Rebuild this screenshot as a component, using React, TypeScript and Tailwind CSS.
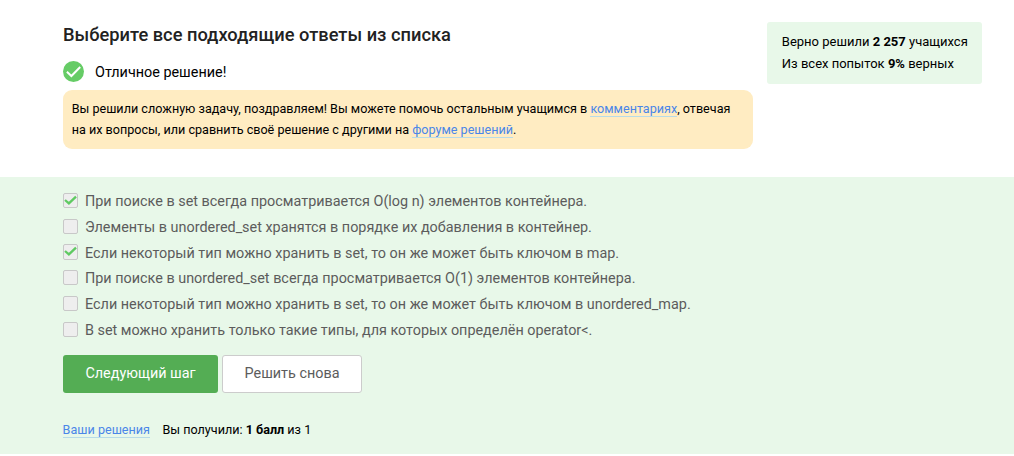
import React from "react";

const answers = [
  { text: "При поиске в set всегда просматривается O(log n) элементов контейнера.", checked: true },
  { text: "Элементы в unordered_set хранятся в порядке их добавления в контейнер.", checked: false },
  { text: "Если некоторый тип можно хранить в set, то он же может быть ключом в map.", checked: true },
  { text: "При поиске в unordered_set всегда просматривается O(1) элементов контейнера.", checked: false },
  { text: "Если некоторый тип можно хранить в set, то он же может быть ключом в unordered_map.", checked: false },
  { text: "В set можно хранить только такие типы, для которых определён operator<.", checked: false },
];

function Link({ children }: { children: React.ReactNode }) {
  return (
    <a href="#" className="border-b border-[#b7dbe8] text-[#4a86e8]">
      {children}
    </a>
  );
}

function Answer({ text, checked }: { text: string; checked: boolean }) {
  return (
    <label className="flex h-[25.8px] items-center gap-[7px]">
      <span className="mb-[0.9px] flex h-[15.3px] w-[15px] shrink-0 justify-center rounded-[2px] border border-[#c8c8c8] bg-[#eee]">
        {checked && (
          <svg viewBox="0 0 13 13" className="size-[13px]" fill="none" stroke="#5fca62" strokeWidth="2.3">
            <path d="M1 6 4.9 9.4 12 2.6" />
          </svg>
        )}
      </span>
      <span className="whitespace-nowrap pt-[1.3px] text-[14.4px] leading-[25px]">{text}</span>
    </label>
  );
}

export default function App() {
  return (
    <div className="flex h-[456px] w-[1014px] flex-col overflow-hidden bg-white font-['Roboto',sans-serif] text-[12.6px] text-black">
      <header className="flex h-[177px] shrink-0 items-start gap-[14px] pl-[63px] pt-[22px]">
        <div className="w-[690px]">
          <h1 className="text-[18.28px] font-medium leading-[26px] text-[#222]">Выберите все подходящие ответы из списка</h1>
          <div className="mt-[13px] flex h-[21px] items-center gap-[11px]">
            <svg viewBox="0 0 21 21" className="size-[21px]">
              <circle cx="10.5" cy="10.5" r="10.5" fill="#66cc66" />
              <path d="M3.9 10.7 8.4 15 17.2 6" fill="none" stroke="#fff" strokeWidth="2" />
            </svg>
            <span className="pt-[2px] text-[14.4px] leading-[21px]">Отличное решение!</span>
          </div>
          <p className="mt-[8px] h-[59px] whitespace-nowrap rounded-[9px] bg-[#ffecc2] px-[8.7px] pt-[8px] leading-[21px]">
            Вы решили сложную задачу, поздравляем! Вы можете помочь остальным учащимся в <Link>комментариях</Link>, отвечая
            <br />
            на их вопросы, или сравнить своё решение с другими на <Link>форуме решений</Link>.
          </p>
        </div>
        <aside className="h-[62px] w-[215px] whitespace-nowrap rounded-[3px] bg-[#e8f8e9] pl-[14.8px] pt-[9px] text-[13px] leading-[22px]">
          <div>
            Верно решили <b>2 257</b> учащихся
          </div>
          <div>
            Из всех попыток <b>9%</b> верных
          </div>
        </aside>
      </header>
      <main className="h-[277px] shrink-0 bg-[#e8f8e9] pl-[63px] pt-[11px]">
        <div className="text-[#5c5c5c]">
          {answers.map((answer) => (
            <Answer key={answer.text} {...answer} />
          ))}
        </div>
        <div className="mt-[12px] flex h-[38px] gap-1 text-[14.4px]">
          <button className="w-[155px] rounded-[3px] bg-[#54ad54] text-white">Следующий шаг</button>
          <button className="w-[140px] rounded-[3px] border border-[#ccc] bg-white text-[#5c5c5c]">Решить снова</button>
        </div>
        <div className="-ml-[0.4px] mt-[27px] flex items-center gap-[12.5px] leading-[20px]">
          <span>
            <Link>Ваши решения</Link>
          </span>
          <span>
            Вы получили: <b>1 балл</b> из 1
          </span>
        </div>
      </main>
    </div>
  );
}
